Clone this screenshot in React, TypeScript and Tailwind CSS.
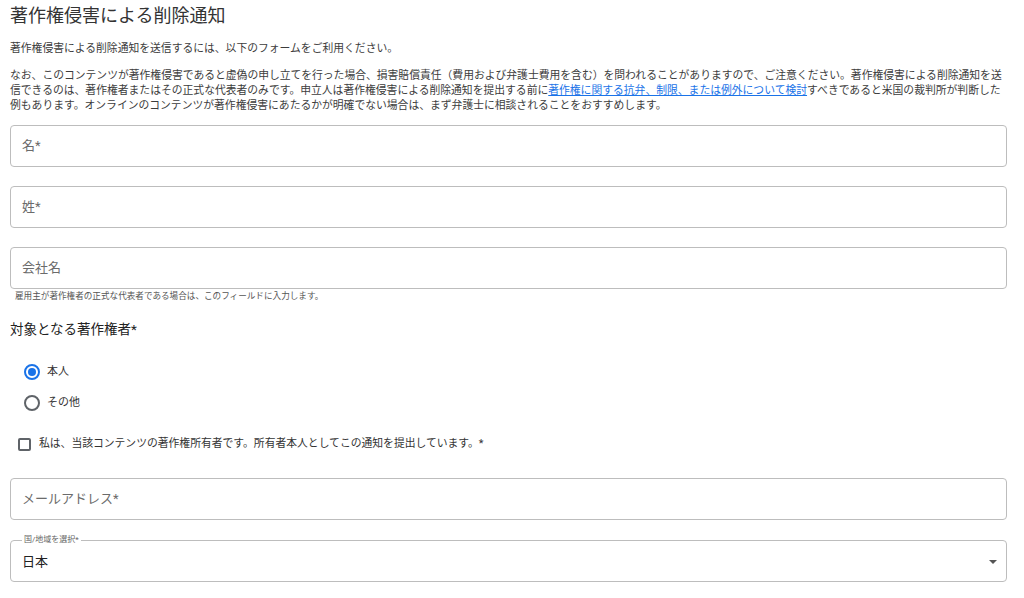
import { useState } from "react";

const FONT = "font-['Roboto','Noto_Sans_CJK_JP',sans-serif]";

const TextField = ({ label, helper }: { label: string; helper?: string }) => (
  <div>
    <div className="flex h-[42px] items-center rounded-[4px] border border-[#bdbdbd] px-[11px]">
      <span className="text-[13px] text-[#6b6b6b]">{label}</span>
    </div>
    {helper && <p className="mt-[1px] pl-[5px] text-[8.6px] leading-[12px] text-[#555]">{helper}</p>}
  </div>
);

export default function App() {
  const [owner, setOwner] = useState("self");

  return (
    <div className={`${FONT} min-h-screen bg-white pl-[10px] pr-[17px] text-[#222]`}>
      <h1 className="pt-[4px] text-[18px] leading-[24px] text-[#333]">著作権侵害による削除通知</h1>
      <p className="mt-[13px] text-[10.8px] leading-[16px] text-[#3c3c3c]">
        著作権侵害による削除通知を送信するには、以下のフォームをご利用ください。
      </p>
      <p className="mt-[11px] text-[10.8px] leading-[15px] text-[#3c3c3c]">
        なお、このコンテンツが著作権侵害であると虚偽の申し立てを行った場合、損害賠償責任（費用および弁護士費用を含む）を問われることがありますので、ご注意ください。著作権侵害による削除通知を送信できるのは、著作権者またはその正式な代表者のみです。申立人は著作権侵害による削除通知を提出する前に
        <a href="#" className="text-[#1a73e8] underline">
          著作権に関する抗弁、制限、または例外について検討
        </a>
        すべきであると米国の裁判所が判断した例もあります。オンラインのコンテンツが著作権侵害にあたるかが明確でない場合は、まず弁護士に相談されることをおすすめします。
      </p>

      <div className="mt-[12px] flex flex-col gap-[19px]">
        <TextField label="名*" />
        <TextField label="姓*" />
        <TextField label="会社名" helper="雇用主が著作権者の正式な代表者である場合は、このフィールドに入力します。" />
      </div>

      <h2 className="mt-[17px] text-[13.5px] leading-[20px] text-[#222]">対象となる著作権者*</h2>

      <div className="mt-[24px] flex flex-col gap-[13px] pl-[14px]">
        {[
          { id: "self", label: "本人" },
          { id: "other", label: "その他" },
        ].map((o) => (
          <label key={o.id} className="flex h-[18px] cursor-pointer items-center gap-[7px]" onClick={() => setOwner(o.id)}>
            <span
              className={`flex h-[16px] w-[16px] items-center justify-center rounded-full border-2 ${
                owner === o.id ? "border-[#1a73e8]" : "border-[#5f6368]"
              }`}
            >
              {owner === o.id && <span className="h-[8px] w-[8px] rounded-full bg-[#1a73e8]" />}
            </span>
            <span className="text-[11px] text-[#333]">{o.label}</span>
          </label>
        ))}
      </div>

      <label className="mt-[24px] flex items-center gap-[8px] pl-[8px]">
        <span className="h-[13px] w-[13px] rounded-[2px] border-2 border-[#5f6368]" />
        <span className="text-[10.8px] text-[#333]">
          私は、当該コンテンツの著作権所有者です。所有者本人としてこの通知を提出しています。*
        </span>
      </label>

      <div className="mt-[26px]">
        <TextField label="メールアドレス*" />
      </div>

      <fieldset className="mt-[16px] h-[46px] rounded-[4px] border border-[#bdbdbd] pl-[11px] pr-[9px]">
        <legend className="px-[2px] text-[8px] leading-[8px] text-[#666]">国/地域を選択*</legend>
        <div className="flex h-[36px] items-center justify-between">
          <span className="text-[13px] text-[#222]">日本</span>
          <svg width="8" height="4" viewBox="0 0 8 4">
            <path d="M0 0 L8 0 L4 4 Z" fill="#555" />
          </svg>
        </div>
      </fieldset>
    </div>
  );
}
